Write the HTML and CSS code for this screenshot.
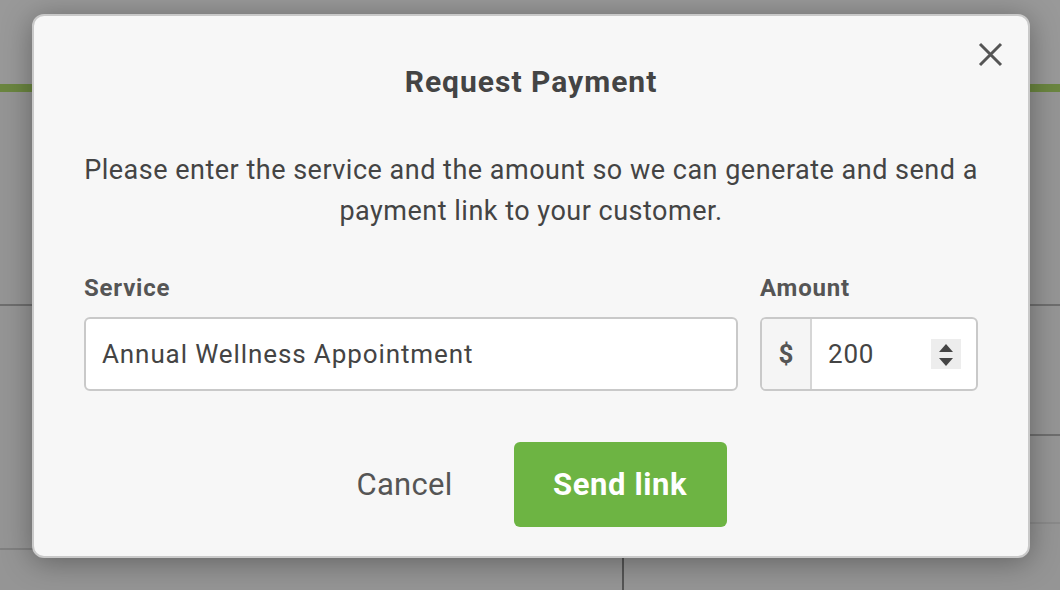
FILE: index.html
```html
<!DOCTYPE html>
<html lang="en">
<head>
<meta charset="utf-8">
<title>Request Payment</title>
<link rel="stylesheet" href="styles.css">
</head>
<body>
<div class="page">
  <header class="topbar"></header>
  <div class="columns">
    <div class="col col-left">
      <div class="row r1"></div>
      <div class="row r2"></div>
    </div>
    <div class="col col-right">
      <div class="row r1"></div>
      <div class="row r3"></div>
      <div class="row r4"></div>
    </div>
  </div>
</div>

<div class="modal" role="dialog" aria-labelledby="mtitle">
  <button class="close" aria-label="Close">
    <svg width="25" height="25" viewBox="0 0 25 25"><path d="M2 2 L23 23 M23 2 L2 23" stroke="#555" stroke-width="3" fill="none"/></svg>
  </button>
  <h2 class="title" id="mtitle">Request Payment</h2>
  <p class="desc">Please enter the service and the amount so we can generate and send a<br>payment link to your customer.</p>
  <div class="fields">
    <div class="field field-service">
      <label class="label">Service</label>
      <div class="input">Annual Wellness Appointment</div>
    </div>
    <div class="field field-amount">
      <label class="label">Amount</label>
      <div class="group">
        <span class="addon">$</span>
        <span class="num">200</span>
        <span class="spin">
          <svg width="30" height="30" viewBox="0 0 30 30"><path d="M8 13 L15 5 L22 13 Z M8 19 L22 19 L15 27 Z" fill="#444"/></svg>
        </span>
      </div>
    </div>
  </div>
  <div class="actions">
    <button class="btn-cancel">Cancel</button>
    <button class="btn-send">Send link</button>
  </div>
</div>
</body>
</html>
```

FILE: styles.css
```css
html, body {
  margin: 0;
  padding: 0;
}
body {
  width: 1060px;
  height: 590px;
  overflow: hidden;
  background: #959595;
  font-family: Roboto, "Liberation Sans", sans-serif;
  position: relative;
}
.page {
  height: 590px;
  display: flex;
  flex-direction: column;
}
.topbar {
  height: 84px;
  border-bottom: 8px solid #6b8640;
  background: #999;
}
.columns {
  flex: 1;
  display: flex;
}
.col {
  display: flex;
  flex-direction: column;
}
.col-left {
  width: 622px;
  border-right: 2px solid #555;
}
.col-right {
  flex: 1;
}
.row {
  border-bottom: 2px solid #6e6e6e;
}
.col-left .r1 { height: 212px; }
.col-left .r2 { height: 242px; border-bottom-color: #808080; }
.col-right .r1 { height: 212px; }
.col-right .r3 { height: 128px; }
.col-right .r4 { height: 86px; border-bottom-color: #8a8a8a; }

.modal {
  position: absolute;
  left: 32px;
  top: 14px;
  width: 998px;
  height: 544px;
  box-sizing: border-box;
  background: #f7f7f7;
  border: 2px solid #c9c9c9;
  border-radius: 12px;
  box-shadow: 0 4px 30px rgba(0, 0, 0, 0.35);
  padding: 50px 50px 0;
  display: flex;
  flex-direction: column;
  color: #444;
}
.close {
  position: absolute;
  right: 25px;
  top: 26px;
  width: 25px;
  height: 25px;
  padding: 0;
  border: 0;
  background: none;
  display: flex;
}
.title {
  margin: 0;
  text-align: center;
  font-size: 30px;
  line-height: 32px;
  letter-spacing: 1px;
  font-weight: 700;
  color: #444;
}
.desc {
  margin: 52px 0 0;
  text-align: center;
  font-size: 27px;
  line-height: 41px;
  letter-spacing: 0.5px;
  color: #444;
  white-space: nowrap;
}
.fields {
  margin-top: 42px;
  display: flex;
  gap: 22px;
}
.field {
  display: flex;
  flex-direction: column;
  gap: 15px;
}
.field-service { flex: 1; }
.field-amount { width: 218px; }
.label {
  font-size: 24px;
  line-height: 28px;
  letter-spacing: 0.8px;
  font-weight: 700;
  color: #555;
}
.input {
  height: 74px;
  box-sizing: border-box;
  border: 2px solid #c9c9c9;
  border-radius: 6px;
  background: #fff;
  padding: 0 16px;
  display: flex;
  align-items: center;
  font-size: 26px;
  letter-spacing: 0.9px;
  color: #444;
}
.group {
  height: 74px;
  box-sizing: border-box;
  border: 2px solid #c9c9c9;
  border-radius: 6px;
  background: #fff;
  display: flex;
  align-items: center;
  overflow: hidden;
}
.addon {
  width: 48px;
  align-self: stretch;
  background: #f5f5f5;
  border-right: 2px solid #d6d6d6;
  display: flex;
  align-items: center;
  justify-content: center;
  font-size: 26px;
  font-weight: 700;
  color: #555;
}
.num {
  flex: 1;
  padding-left: 16px;
  font-size: 26px;
  letter-spacing: 0.8px;
  color: #444;
}
.spin {
  width: 30px;
  height: 30px;
  margin-right: 15px;
  background: #ededed;
  display: flex;
}
.actions {
  margin-top: 51px;
  display: flex;
  justify-content: center;
  align-items: center;
  gap: 61px;
}
.btn-cancel {
  border: 0;
  background: none;
  font-family: inherit;
  font-size: 31px;
  letter-spacing: 0.3px;
  color: #555;
  padding: 0 0 0 21px;
}
.btn-send {
  width: 213px;
  height: 85px;
  border: 0;
  border-radius: 6px;
  background: #6db443;
  color: #fff;
  font-family: inherit;
  font-size: 31px;
  letter-spacing: 0.6px;
  font-weight: 700;
  padding: 0;
}
```
